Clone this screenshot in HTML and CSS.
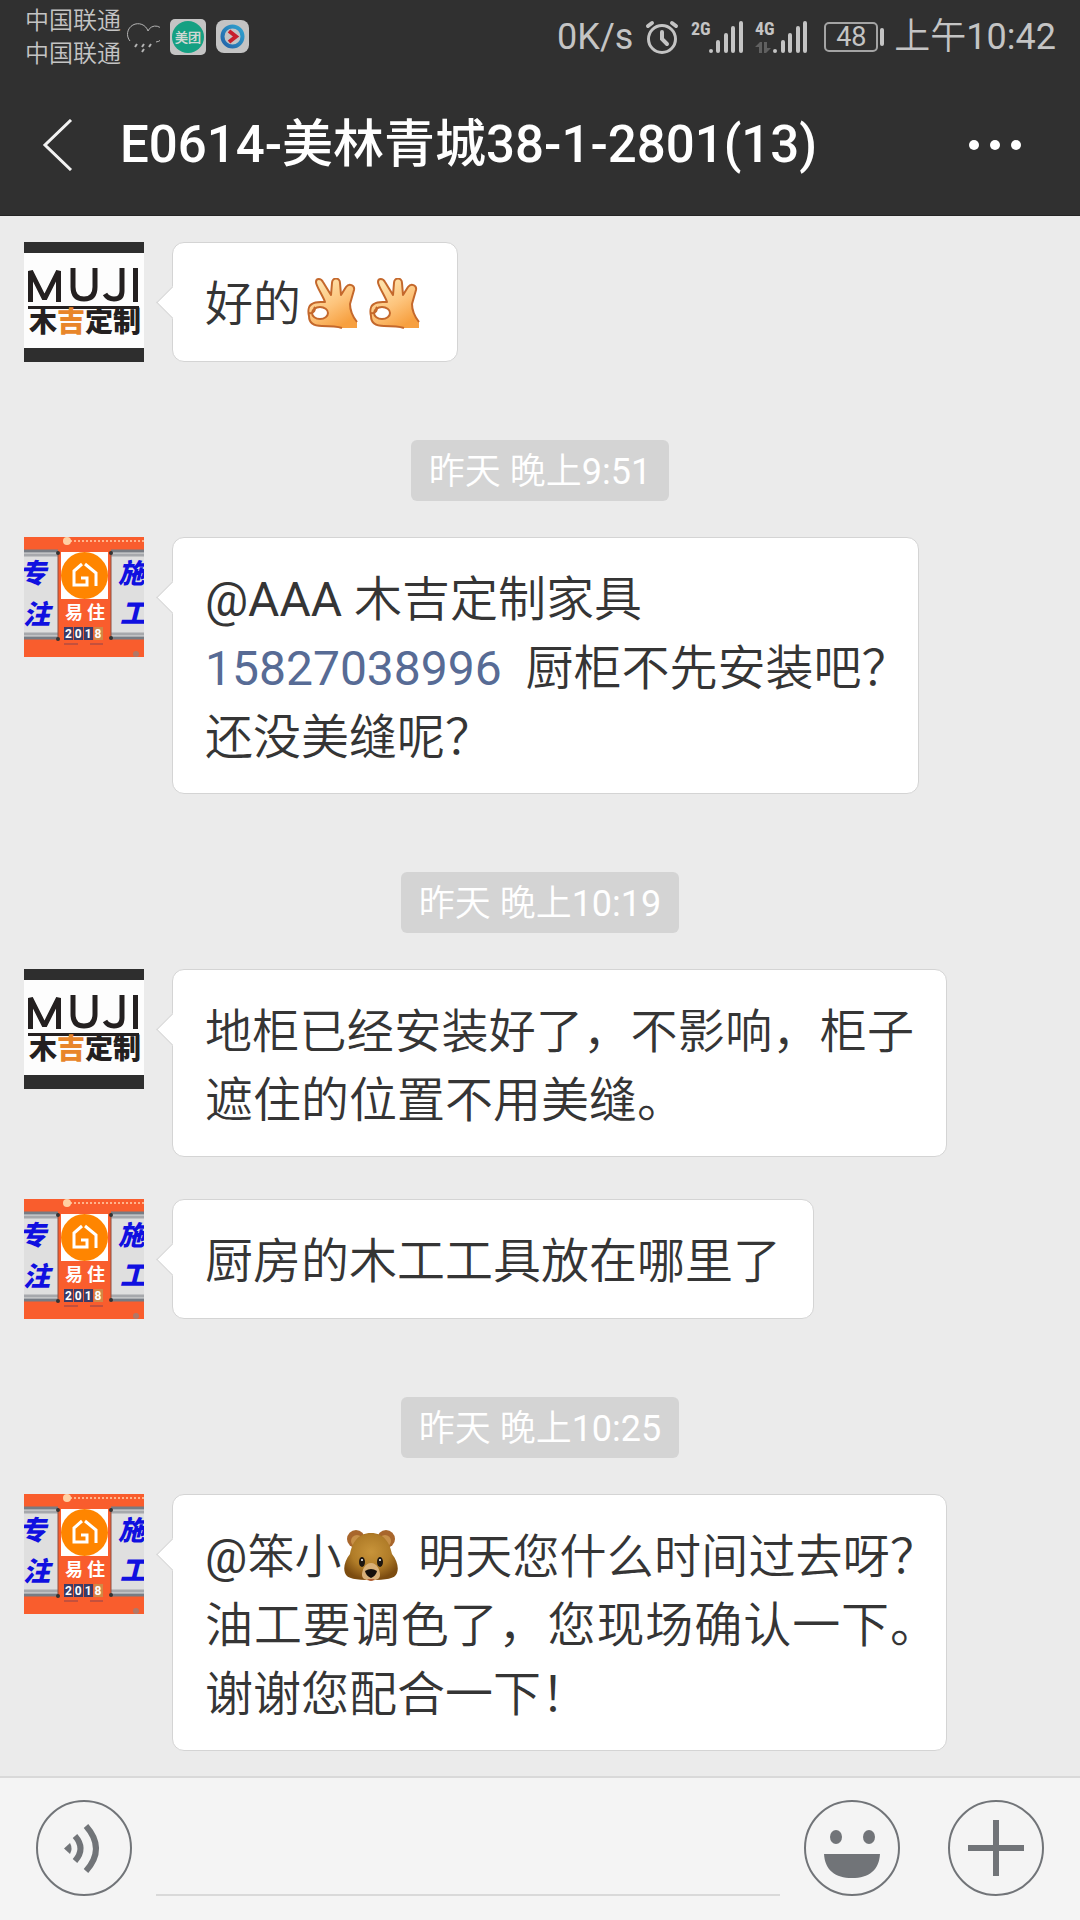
FILE: index.html
```html
<!DOCTYPE html>
<html lang="zh-CN">
<head>
<meta charset="utf-8">
<meta name="viewport" content="width=device-width, initial-scale=1">
<title>E0614-美林青城38-1-2801(13)</title>
<link rel="stylesheet" href="styles.css">
</head>
<body>
<svg class="sprite" aria-hidden="true">
  <defs>
    <linearGradient id="skin" x1="0" y1="0" x2="0.6" y2="1">
      <stop offset="0.2" stop-color="#fee0a8"/>
      <stop offset="0.6" stop-color="#fdc47c"/>
      <stop offset="1" stop-color="#f7a040"/>
    </linearGradient>
    <radialGradient id="fur" cx="0.5" cy="0.4" r="0.6">
      <stop offset="0" stop-color="#c8943a"/>
      <stop offset="0.6" stop-color="#b07c28"/>
      <stop offset="1" stop-color="#7c4c10"/>
    </radialGradient>
    <linearGradient id="ring" x1="0" y1="1" x2="1" y2="0">
      <stop offset="0" stop-color="#2463a8"/>
      <stop offset="1" stop-color="#2fa3d0"/>
    </linearGradient>
  </defs>

  <symbol id="avatar-muji" viewBox="0 0 120 120">
    <rect width="120" height="120" fill="#fdfdfd"/>
    <rect width="120" height="11" fill="#2e2e2e"/>
    <rect y="106" width="120" height="14" fill="#2e2e2e"/>
    <g fill="none" stroke="#242020" stroke-width="5">
      <path d="M6.500 60V29L20.500 57L34.500 29V60" stroke-linejoin="bevel"/>
      <path d="M49 26V45Q49 57 60 57T71 45V26"/>
      <path d="M98 26V49Q98 57 90 57Q84 57 81 52"/>
      <path d="M111.500 26V60"/>
    </g>
    <rect x="4" y="64" width="111" height="3" fill="#242020"/>
  </symbol>

  <symbol id="avatar-yizhu" viewBox="0 0 120 120">
    <rect width="120" height="120" fill="#f95d2d"/>
    <path d="M46 4H120" stroke="#ffb48c" stroke-width="2" stroke-dasharray="2 2"/>
    <circle cx="43" cy="4" r="4" fill="#ffd0a4"/>
    <rect y="14" width="34" height="88" fill="#dfdfdf"/>
    <rect x="87" y="14" width="33" height="88" fill="#dfdfdf"/>
    <path d="M0 14H34M87 14H120M0 101H34M87 101H120" stroke="#777c84" stroke-width="3"/>
    <path d="M0 18H34M87 18H120M0 97H34M87 97H120" stroke="#a6a8ac" stroke-width="3"/>
    <path d="M34 14V102M87 14V102" stroke="#8b5144" stroke-width="1"/>
    <circle cx="34" cy="16" r="2" fill="#333"/><circle cx="87" cy="16" r="2" fill="#333"/>
    <circle cx="34" cy="102" r="2" fill="#333"/><circle cx="87" cy="101" r="2" fill="#333"/>
    <rect x="37" y="15" width="47" height="47" fill="#fff"/>
    <circle cx="60.500" cy="38.500" r="23.500" fill="#ff8500"/>
    <path d="M58 27L50 34V48H63V41H57M61 27L72 36V49" fill="none" stroke="#fff" stroke-width="3"/>
    <path d="M40 90h9v13h-9zM50 90h9v13h-9zM60 90h9v13h-9z" fill="#3c3c66"/>
    <path d="M70 90h9v13h-9z" fill="#d08848"/>
    <path d="M40 107H54M66 107H79" stroke="#c4503c" stroke-width="2"/>
    <circle cx="112" cy="117" r="3" fill="#b07868"/>
  </symbol>

  <symbol id="ok-hand" viewBox="0 0 50 52">
    <path d="M49 50H34C28 48 20 48 14 48C5 48 1 44 1 38C0 34 0 28 4 26C8 23 13 24 17 24C15 18 8 8 8 4C8 0 13 0 15 4L23 17L24 5C24-1 32-1 32 5L33 17L38 9C41 5 47 7 46 12L42 26C42 33 45 39 49 44Z" fill="url(#skin)"/>
    <path d="M34 50C28 48 20 48 14 48C5 48 1 44 1 38C0 34 0 28 4 26C8 23 13 24 17 24C15 18 8 8 8 4C8 0 13 0 15 4L23 17L24 5C24-1 32-1 32 5L33 17L38 9C41 5 47 7 46 12L42 26C42 33 45 39 49 44" fill="none" stroke="#c4682c" stroke-width="2" stroke-linejoin="round"/>
    <ellipse cx="12" cy="35" rx="8" ry="6" fill="#fff" stroke="#c4682c" stroke-width="2"/>
    <path d="M1 35C6 36 8 31 6 29" fill="none" stroke="#c4682c" stroke-width="2"/>
  </symbol>

  <symbol id="bear" viewBox="0 0 54 52">
    <circle cx="12" cy="9" r="9" fill="#a8662c"/><circle cx="42" cy="9" r="9" fill="#a8662c"/>
    <circle cx="13" cy="11" r="6" fill="#c89048"/><circle cx="41" cy="11" r="6" fill="#c89048"/>
    <path d="M27 3C40 3 46 13 48 24C53 30 55 38 53 43C51 49 42 50 27 50S3 49 1 43C-1 38 1 30 6 24C8 13 14 3 27 3Z" fill="url(#fur)"/>
    <path d="M27 33C21 33 18 40 18 45C18 49 22 50 27 51C32 50 36 49 36 45C36 40 33 33 27 33Z" fill="#d8b078"/>
    <path d="M23 49Q27 53 31 49Z" fill="#b05c34"/>
    <path d="M21 41Q27 37 33 41Q32 46 27 48Q22 46 21 41Z" fill="#15100c"/>
    <ellipse cx="18" cy="32" rx="3" ry="5" fill="#1c1610"/><ellipse cx="36" cy="32" rx="3" ry="5" fill="#1c1610"/>
    <circle cx="18" cy="30" r="1" fill="#fff"/><circle cx="36" cy="30" r="1" fill="#fff"/>
  </symbol>
</svg>

<div class="app">
  <header class="top">
    <div class="status">
      <div class="status-left">
        <div class="carriers"><span>中国联通</span><span>中国联通</span></div>
        <svg class="rain" width="34" height="34" viewBox="0 0 34 34" aria-hidden="true">
          <path d="M4 21A10.500 10.500 0 1 1 22 11A8 8 0 1 1 30 22" fill="none" stroke="#b4b4b4" stroke-width="1"/>
          <path d="M11 24l-2 3M18 24l-2 3M25 24l-2 3M18 29l-2 3" stroke="#b4b4b4" stroke-width="2"/>
        </svg>
        <svg class="meituan" width="36" height="36" viewBox="0 0 36 36" aria-hidden="true">
          <rect width="36" height="36" rx="5" fill="#c4c4c4"/>
          <circle cx="18" cy="18" r="16" fill="#15a082"/>
          <text x="5" y="23">美团</text>
        </svg>
        <svg width="34" height="34" viewBox="0 0 34 34" aria-hidden="true">
          <rect width="33" height="33" rx="8" fill="#c4c4c4"/>
          <circle cx="16.500" cy="16.500" r="10" fill="none" stroke="url(#ring)" stroke-width="4"/>
          <path d="M13 11L20 16.500L13 22" fill="none" stroke="#c8202c" stroke-width="4"/>
        </svg>
      </div>
      <div class="status-right">
        <span>0K/s</span>
        <svg class="alarm" width="34" height="36" viewBox="0 0 34 36" aria-hidden="true">
          <circle cx="17" cy="20" r="13.500" fill="none" stroke="#c4c4c4" stroke-width="3"/>
          <path d="M17 13V20L22 25" fill="none" stroke="#c4c4c4" stroke-width="4" stroke-linecap="round"/>
          <path d="M3 7L7 4M31 7L27 4" stroke="#c4c4c4" stroke-width="4" stroke-linecap="round"/>
        </svg>
        <svg class="signal" width="52" height="36" viewBox="0 0 52 36" aria-hidden="true">
          <text x="0" y="16">2G</text>
          <path d="M20 32V32M27 32V23M35 32V16M42 32V9M50 32V4" stroke="#c4c4c4" stroke-width="4" stroke-linecap="round"/>
        </svg>
        <svg class="signal" width="53" height="36" viewBox="0 0 53 36" aria-hidden="true">
          <text x="0" y="16">4G</text>
          <path d="M0 28L5 23H7V34H4V28ZM9 23H12V29H16L11 34H9Z" fill="#606060"/>
          <path d="M20 32V32M28 32V23M35 32V16M43 32V9M50 32V4" stroke="#c4c4c4" stroke-width="4" stroke-linecap="round"/>
        </svg>
        <span class="battery">48</span>
        <span>上午10:42</span>
      </div>
    </div>
    <div class="titlebar">
      <button class="back" type="button" aria-label="返回">
        <svg width="32" height="52" viewBox="0 0 32 52"><path d="M29 1L3 26L29 51" fill="none" stroke="#f2f2f2" stroke-width="3"/></svg>
      </button>
      <h1>E0614-美林青城38-1-2801(13)</h1>
      <button class="more" type="button" aria-label="更多">
        <svg width="54" height="12" viewBox="0 0 54 12" fill="#fff"><circle cx="6" cy="6" r="5"/><circle cx="27" cy="6" r="5"/><circle cx="48" cy="6" r="5"/></svg>
      </button>
    </div>
  </header>

  <main class="chat">
    <article class="message">
      <svg class="avatar muji" viewBox="0 0 120 120" role="img" aria-label="木吉定制"><use href="#avatar-muji"/><text x="5" y="90">木<tspan class="accent">吉</tspan>定制</text></svg>
      <p class="bubble">好的<svg class="emoji hand" role="img" aria-label="OK"><use href="#ok-hand"/></svg><svg class="emoji hand" role="img" aria-label="OK"><use href="#ok-hand"/></svg></p>
    </article>

    <time class="stamp">昨天 晚上9:51</time>
    <article class="message">
      <svg class="avatar yizhu" viewBox="0 0 120 120" role="img" aria-label="易住"><use href="#avatar-yizhu"/><text class="side" x="-5" y="46">专</text><text class="side" x="-1" y="87">注</text><text class="side" x="94" y="46">施</text><text class="side" x="96" y="86">工</text><text class="name" x="41" y="82">易 住</text><text class="year" x="41" y="101">2 0 1 8</text></svg>
      <p class="bubble">@AAA 木吉定制家具<br><a href="tel:15827038996">15827038996</a>&nbsp; 厨柜不先安装吧<span class="half">？</span><br>还没美缝呢<span class="half">？</span></p>
    </article>

    <time class="stamp">昨天 晚上10:19</time>
    <article class="message">
      <svg class="avatar muji" viewBox="0 0 120 120" role="img" aria-label="木吉定制"><use href="#avatar-muji"/><text x="5" y="90">木<tspan class="accent">吉</tspan>定制</text></svg>
      <p class="bubble full"><span class="line tight">地柜已经安装好了，不影响，柜子</span>遮住的位置不用美缝。</p>
    </article>
    <article class="message">
      <svg class="avatar yizhu" viewBox="0 0 120 120" role="img" aria-label="易住"><use href="#avatar-yizhu"/><text class="side" x="-5" y="46">专</text><text class="side" x="-1" y="87">注</text><text class="side" x="94" y="46">施</text><text class="side" x="96" y="86">工</text><text class="name" x="41" y="82">易 住</text><text class="year" x="41" y="101">2 0 1 8</text></svg>
      <p class="bubble">厨房的木工工具放在哪里了</p>
    </article>

    <time class="stamp">昨天 晚上10:25</time>
    <article class="message">
      <svg class="avatar yizhu" viewBox="0 0 120 120" role="img" aria-label="易住"><use href="#avatar-yizhu"/><text class="side" x="-5" y="46">专</text><text class="side" x="-1" y="87">注</text><text class="side" x="94" y="46">施</text><text class="side" x="96" y="86">工</text><text class="name" x="41" y="82">易 住</text><text class="year" x="41" y="101">2 0 1 8</text></svg>
      <p class="bubble full"><span class="line tight">@笨小<svg class="emoji bear" role="img" aria-label="熊"><use href="#bear"/></svg>明天您什么时间过去呀<span class="half">？</span></span><span class="line">油工要调色了，您现场确认一下<span class="half">。</span></span>谢谢您配合一下！</p>
    </article>
  </main>

  <footer class="composer">
    <button type="button" aria-label="语音">
      <svg viewBox="0 0 96 96"><circle cx="48" cy="48" r="47"/><path class="solid" d="M28 48.500L34 43Q37 48.500 34 54Z"/><path class="wave" d="M39 36Q50 48.500 39 61M50 26Q70 48.500 50 71"/></svg>
    </button>
    <input type="text" aria-label="消息">
    <button type="button" aria-label="表情">
      <svg viewBox="0 0 96 96"><circle cx="48" cy="48" r="47"/><ellipse class="solid" cx="32" cy="37" rx="6" ry="7"/><ellipse class="solid" cx="65" cy="37" rx="6" ry="7"/><path class="solid" d="M20 54H76C75 70 65 78 48 78S21 70 20 54Z"/></svg>
    </button>
    <button class="plus" type="button" aria-label="添加">
      <svg viewBox="0 0 96 96"><circle cx="48" cy="48" r="47"/><path class="solid" d="M20 45H45V20H51V45H76V51H51V76H45V51H20Z"/></svg>
    </button>
  </footer>
</div>
</body>
</html>
```
FILE: styles.css
```css
* { box-sizing: border-box; }
body {
  margin: 0;
  background: #ebebeb;
  color: #353535;
  font-family: Roboto, "Noto Sans CJK SC DemiLight", "Noto Sans CJK SC", sans-serif;
}
button {
  display: flex;
  align-items: center;
  justify-content: center;
  padding: 0;
  border: 0;
  background: none;
}
.sprite { position: absolute; width: 0; height: 0; }
.app { display: flex; flex-direction: column; min-height: 100vh; }

.top { background: #303030; color: #fff; border-bottom: 1px solid #242424; }
.status {
  display: flex;
  align-items: center;
  justify-content: space-between;
  height: 74px;
  padding: 0 24px;
  color: #c4c4c4;
  font-size: 36px;
  line-height: 42px;
}
.status-left, .status-right { display: flex; align-items: center; }
.status-left { gap: 10px; }
.carriers { display: flex; flex-direction: column; padding: 2px 0 0 1px; font-size: 24px; line-height: 33px; }
.rain { margin-left: -5px; }
.meituan text { font-size: 13px; font-weight: 700; fill: #d0d8d4; }
.status-right { gap: 12px; }
.signal text { font-size: 18px; font-weight: 700; font-family: "Roboto Condensed", Roboto, sans-serif; fill: #c4c4c4; }
.battery {
  position: relative;
  width: 54px;
  height: 30px;
  margin: 0 4px;
  border: 2px solid #a4a4a4;
  border-radius: 5px;
  font-size: 27px;
  line-height: 27px;
  text-align: center;
}
.battery::after {
  content: "";
  position: absolute;
  top: 4px;
  right: -8px;
  width: 4px;
  height: 18px;
  border-radius: 2px;
  background: #c4c4c4;
}
.titlebar { display: flex; align-items: center; height: 141px; padding: 0 58px 0 42px; }
.titlebar h1 {
  flex: 1;
  margin: 0 0 0 46px;
  font-family: Roboto, "Noto Sans CJK SC", sans-serif;
  font-size: 51px;
  font-weight: 500;
  line-height: 60px;
  white-space: nowrap;
}

.chat { flex: 1; display: flex; flex-direction: column; padding: 26px 24px 0; }
.message { display: flex; align-items: flex-start; gap: 28px; margin-bottom: 42px; }
.message:last-child { margin-bottom: 24px; }
.avatar { flex: none; width: 120px; height: 120px; font-family: "Noto Sans CJK SC", sans-serif; }
.muji text { font-size: 28px; font-weight: 900; fill: #242020; }
.muji .accent { fill: #e8862a; }
.yizhu .side { font-size: 27px; font-weight: 900; font-style: italic; fill: #1010e0; }
.yizhu .name { font-size: 18px; font-weight: 700; fill: #fff; }
.yizhu .year { font-family: Roboto, sans-serif; font-size: 12px; font-weight: 700; fill: #fff; }
.bubble {
  position: relative;
  max-width: 775px;
  min-height: 120px;
  margin: 0;
  padding: 27px 32px 21px;
  border: 1px solid #d4d4d4;
  border-radius: 12px;
  background: #fff;
  font-size: 48px;
  line-height: 69px;
}
.bubble.full { width: 100%; }
.bubble::before {
  content: "";
  position: absolute;
  top: 48px;
  left: -12px;
  width: 22px;
  height: 22px;
  border: solid #d4d4d4;
  border-width: 0 0 1px 1px;
  background: #fff;
  transform: rotate(45deg);
}
.bubble a { color: #576b95; text-decoration: none; }
.line { display: block; text-align: justify; text-align-last: justify; }
.tight { font-size: 47px; }
/* closing punctuation takes half a cell at the end of a line */
.half { display: inline-block; width: 24px; text-align: left; text-align-last: left; white-space: nowrap; }
.emoji { margin: 0 4px 0 6px; vertical-align: -9px; height: 52px; }
.hand { width: 52px; }
.bear { width: 54px; margin: 0 20px 0 2px; }
.stamp {
  align-self: center;
  margin: 36px 0;
  padding: 3px 18px 0;
  border-radius: 6px;
  background: #d4d4d4;
  color: #fff;
  font-size: 36px;
  line-height: 58px;
}

.composer {
  display: flex;
  align-items: center;
  gap: 24px;
  height: 144px;
  padding: 0 36px 2px;
  border-top: 2px solid #d9d9d9;
  background: #f4f4f4;
}
.composer button { flex: none; width: 96px; height: 96px; }
.composer .plus { margin-left: 24px; }
.composer svg { width: 96px; height: 96px; fill: none; stroke: #717478; stroke-width: 2; }
.composer .solid { fill: #717478; stroke: none; }
.composer .wave { stroke-width: 6; }
.composer input {
  flex: 1;
  min-width: 0;
  height: 96px;
  padding: 0;
  border: 0;
  border-bottom: 2px solid #d9d9d9;
  outline: 0;
  background: none;
  font: inherit;
  font-size: 48px;
}
```
